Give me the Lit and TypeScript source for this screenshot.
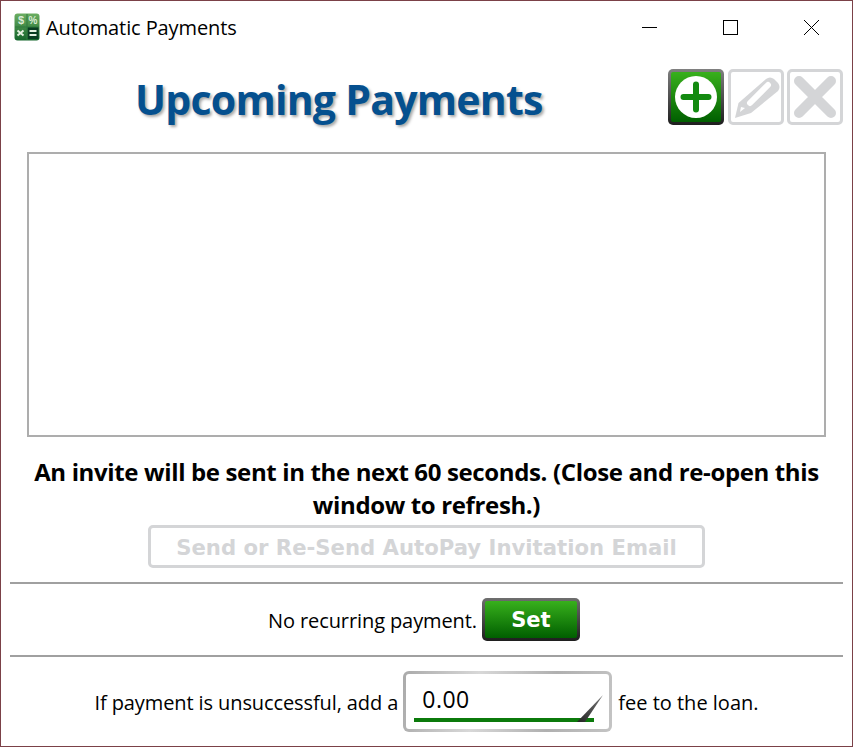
import { LitElement, html, css } from "lit";
import { customElement } from "lit/decorators.js";

@customElement("app-root")
export class AppRoot extends LitElement {
  static styles = css`
    :host {
      display: block;
      width: 853px;
      height: 747px;
      box-sizing: border-box;
      background: #fff;
      border: 1px solid #7b4148;
      font-family: "Open Sans", "Noto Sans", sans-serif;
      color: #000;
      overflow: hidden;
    }

    .titlebar {
      display: flex;
      align-items: center;
      height: 52px;
      padding-left: 13px;
    }
    .app-icon {
      width: 26px;
      height: 28px;
      margin-right: 6px;
      flex-shrink: 0;
    }
    .window-title {
      font-size: 20px;
      letter-spacing: -0.1px;
      flex: 1;
    }
    .controls {
      display: flex;
      height: 52px;
    }
    .controls svg {
      width: 81px;
      height: 52px;
      display: block;
    }

    .header {
      display: flex;
      align-items: center;
      height: 56px;
      margin-top: 16px;
      padding: 0 9px 0 134px;
    }
    h1 {
      flex: 1;
      margin: 4px 0 0;
      font-family: "Open Sans", sans-serif;
      font-size: 41px;
      font-weight: 700;
      letter-spacing: -0.75px;
      color: #05508f;
      text-shadow: 2px 2px 3px rgba(0, 0, 0, 0.35);
      white-space: nowrap;
    }
    .tools {
      display: flex;
      gap: 3px;
    }
    .tool {
      width: 56px;
      height: 56px;
      box-sizing: border-box;
      padding: 0;
      border-radius: 5px;
      display: flex;
      align-items: center;
      justify-content: center;
      background: #fff;
      border: 3px solid #d4d5d7;
    }
    .tool.on {
      margin-right: 1px;
      border: 3px solid transparent;
      background:
        linear-gradient(#38b01c, #005f00) padding-box,
        linear-gradient(#808080, #1e1e1e) border-box;
    }
    .tool svg {
      width: 50px;
      height: 50px;
      display: block;
    }

    .list {
      height: 285px;
      margin: 27px 26px 0 26px;
      box-sizing: border-box;
      border: 2px solid #adadad;
      background: #fff;
    }

    .notice {
      margin: 18px 0 0;
      text-align: center;
      font-size: 24px;
      font-weight: 700;
      line-height: 33px;
      letter-spacing: -0.36px;
      padding: 0 20px;
    }

    .send {
      display: block;
      width: 557px;
      height: 43px;
      margin: 4px 0 0 147px;
      box-sizing: border-box;
      border: 3px solid #d4d5d7;
      border-radius: 5px;
      background: #fff;
      color: #d4d5d7;
      font-family: "DejaVu Sans", sans-serif;
      font-size: 21.2px;
      font-weight: 700;
      padding: 1px 0 0;
    }

    hr {
      height: 2px;
      margin: 0 9px;
      border: 0;
      background: #a0a0a0;
    }
    .rule-top {
      margin-top: 14px;
    }

    .row {
      display: flex;
      align-items: center;
      justify-content: center;
      font-size: 20px;
    }
    .recurring {
      height: 71px;
      gap: 5px;
      padding-right: 5px;
      letter-spacing: -0.1px;
    }
    .recurring span {
      padding-top: 2px;
    }
    .set {
      width: 98px;
      height: 43px;
      box-sizing: border-box;
      border: 3px solid transparent;
      border-radius: 5px;
      padding: 0;
      background:
        linear-gradient(#38b01c, #005f00) padding-box,
        linear-gradient(#6e6e6e, #1e1e1e) border-box;
      color: #fff;
      font-family: "DejaVu Sans", sans-serif;
      font-size: 21px;
      font-weight: 700;
    }

    .fee {
      height: 89px;
      gap: 5px;
    }
    .fee span {
      padding-top: 2px;
    }
    .lead {
      letter-spacing: -0.1px;
    }
    .tail {
      margin-left: 1px;
    }
    .field {
      position: relative;
      width: 209px;
      height: 61px;
      box-sizing: border-box;
      border: 3px solid transparent;
      border-radius: 6px;
      background:
        linear-gradient(#fff, #fff) padding-box,
        linear-gradient(100deg, #aaa, #d8d8d8 35%, #b0b0b0 70%, #c4c4c4) border-box;
      padding: 0 15px 0 8px;
    }
    .field input {
      display: block;
      width: 100%;
      height: 44px;
      margin-top: 4px;
      box-sizing: border-box;
      border: 0;
      border-bottom: 4px solid #0b7a0b;
      padding: 2px 0 0 8px;
      background: transparent;
      font: inherit;
      font-size: 23px;
      letter-spacing: 0.5px;
      color: #000;
      outline: none;
    }
    .corner {
      position: absolute;
      right: 6px;
      top: 21px;
      width: 28px;
      height: 27px;
      display: block;
    }
  `;

  render() {
    return html`
      <div class="titlebar">
        <svg class="app-icon" viewBox="0 0 26 28">
          <defs>
            <linearGradient id="calc" x1="0" y1="0" x2="0" y2="1">
              <stop offset="0" stop-color="#6cae62" />
              <stop offset="1" stop-color="#14652b" />
            </linearGradient>
          </defs>
          <rect x="0.5" y="0.5" width="25" height="27" rx="3" fill="url(#calc)" />
          <rect x="13.5" y="14" width="11" height="12" fill="#0a3d22" />
          <path d="M13 1v26M1 14h24" stroke="#2f7a3e" stroke-width="1" />
          <text x="7" y="11" text-anchor="middle" font-family="Liberation Sans" font-size="11" font-weight="700" fill="#dcebd8">$</text>
          <text x="19" y="11" text-anchor="middle" font-family="Liberation Sans" font-size="10" font-weight="700" fill="#dcebd8">%</text>
          <path d="M3.500 17.500l6 5M9.500 17.500l-6 5" stroke="#e6f2e2" stroke-width="2" />
          <path d="M15.500 18h7M15.500 22h7" stroke="#e6f2e2" stroke-width="2" />
        </svg>
        <span class="window-title">Automatic Payments</span>
        <div class="controls">
          <svg viewBox="0 0 81 52"><path d="M33 26.500h15" stroke="#000" /></svg>
          <svg viewBox="0 0 81 52"><rect x="33.500" y="19.500" width="14" height="14" fill="none" stroke="#000" /></svg>
          <svg viewBox="0 0 81 52"><path d="M33 19l15 15M48 19L33 34" stroke="#000" /></svg>
        </div>
      </div>

      <div class="header">
        <h1>Upcoming Payments</h1>
        <div class="tools">
          <button class="tool on">
            <svg viewBox="0 0 50 50">
              <circle cx="25" cy="25" r="21" fill="#fff" />
              <path d="M25 12.500v25M12.500 25h25" stroke="#138a10" stroke-width="6" stroke-linecap="round" />
            </svg>
          </button>
          <button class="tool">
            <svg viewBox="0 0 50 50">
              <path d="M4 46L7.500 31L35 7Q39 4 43 7L47 11Q50 15 47 19L20 41Z" fill="#d4d5d7" />
              <path d="M19 31L37 13" stroke="#fff" stroke-width="6" stroke-linecap="round" />
              <path d="M9 40L14 36L10 35Z" fill="#fff" />
            </svg>
          </button>
          <button class="tool">
            <svg viewBox="0 0 50 50">
              <path d="M9 9l32 32M41 9L9 41" stroke="#d4d5d7" stroke-width="10" stroke-linecap="round" />
            </svg>
          </button>
        </div>
      </div>

      <div class="list"></div>

      <p class="notice">An invite will be sent in the next 60 seconds. (Close and re-open this window to refresh.)</p>

      <button class="send">Send or Re-Send AutoPay Invitation Email</button>

      <hr class="rule-top" />
      <div class="row recurring">
        <span>No recurring payment.</span>
        <button class="set">Set</button>
      </div>
      <hr />
      <div class="row fee">
        <span class="lead">If payment is unsuccessful, add a</span>
        <div class="field">
          <input value="0.00" />
          <svg class="corner" viewBox="0 0 28 27">
            <defs>
              <linearGradient id="tri" x1="0" y1="1" x2="1" y2="0">
                <stop offset="0" stop-color="#222" />
                <stop offset="1" stop-color="#777" />
              </linearGradient>
            </defs>
            <path d="M28 0L10 27H2z" fill="url(#tri)" />
          </svg>
        </div>
        <span class="tail">fee to the loan.</span>
      </div>
    `;
  }
}
